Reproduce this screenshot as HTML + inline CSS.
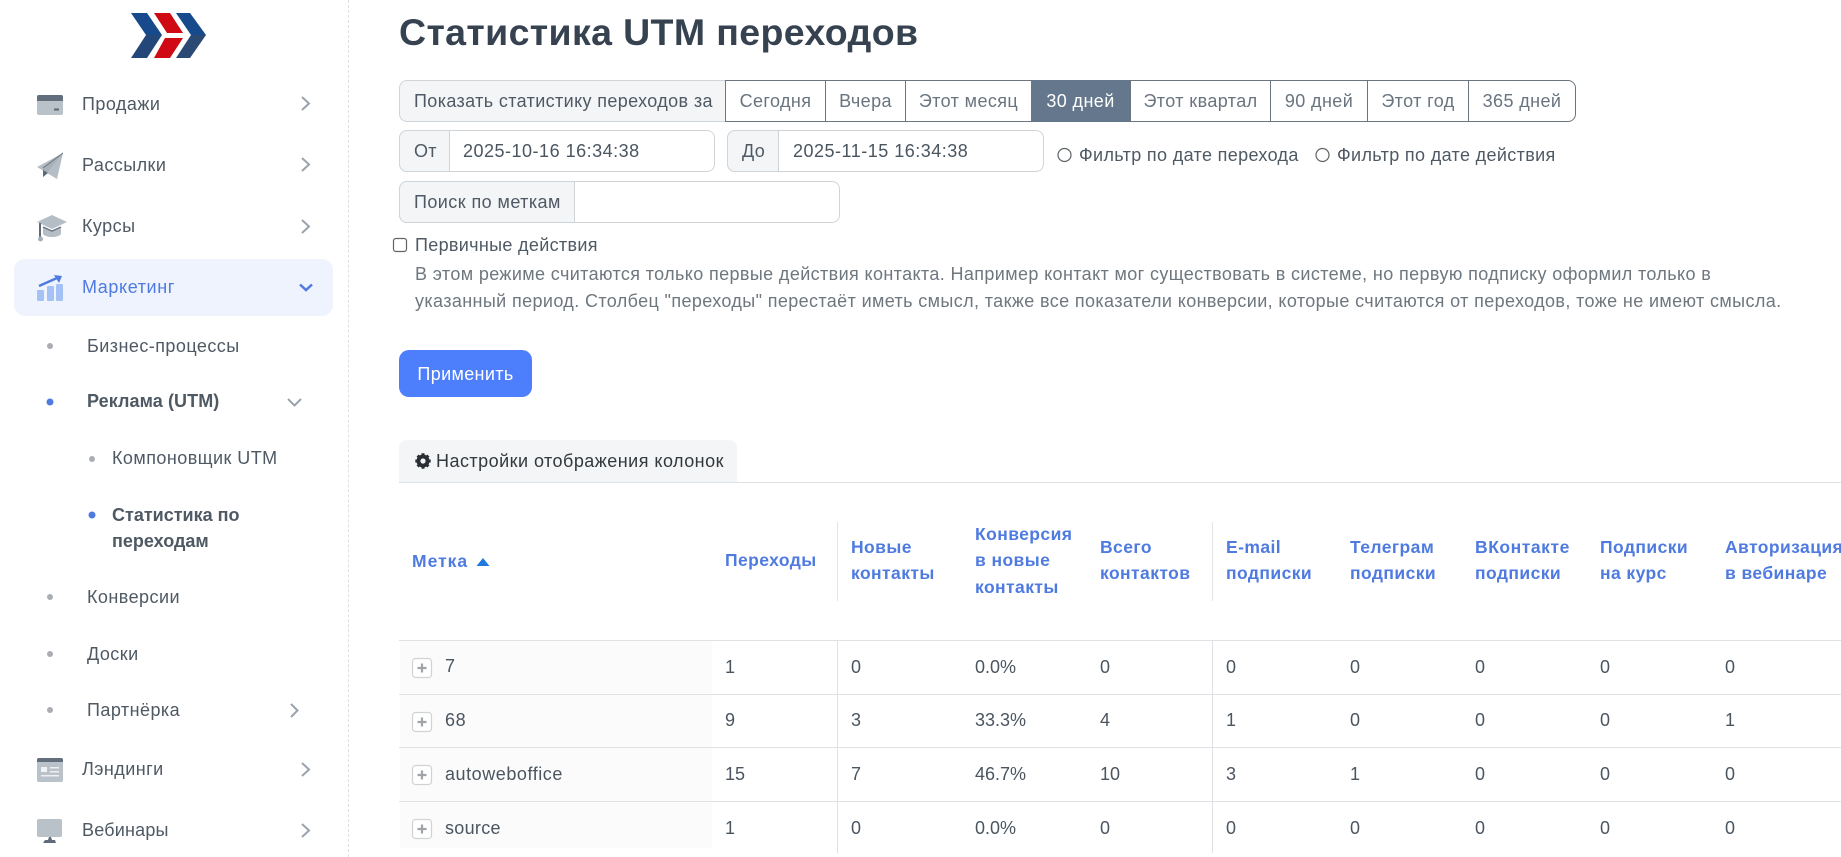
<!DOCTYPE html>
<html lang="ru"><head><meta charset="utf-8"><title>Статистика UTM переходов</title>
<style>
html,body{margin:0;padding:0;background:#fff}
body{width:1841px;height:857px;overflow:hidden;position:relative;font-family:"Liberation Sans",sans-serif;font-size:18px;color:#4e5964}
.a,.t{position:absolute;white-space:nowrap}
.t{line-height:24px;letter-spacing:.38px}
.b{position:absolute;box-sizing:border-box}
.n{color:#4e5964;letter-spacing:.45px}
.h{color:#4f7be0;font-weight:bold;font-size:17.5px;letter-spacing:.42px}
.c{color:#4a5560;letter-spacing:0}
svg{position:absolute;overflow:visible}
.btn{position:absolute;box-sizing:border-box;top:80px;height:42px;border:1px solid #6c757d;line-height:41px;text-align:center;color:#69747f;background:#fff;letter-spacing:.4px;white-space:nowrap}
</style></head><body>

<div class="b" style="left:348px;top:0;height:857px;border-left:1px dashed #dcdfe3"></div>
<svg style="left:0;top:0" width="240" height="70">
<polygon points="131,13 147,13 162,35 146,35" fill="#174a8c"/><polygon points="146,35 162,35 147,58 131,58" fill="#24477a"/>
<polygon points="154,13 170,13 183,33 167,33" fill="#d00a14"/><polygon points="165,38 183,38 170,58 154,58" fill="#d00a14"/>
<polygon points="176,13 190,13 206,35 191,35" fill="#174a8c"/><polygon points="191,35 206,35 190,58 176,58" fill="#2a4a74"/>
</svg>

<div class="b" style="left:14px;top:259px;width:319px;height:57px;background:#eef3fd;border-radius:11px"></div>

<!-- icons -->
<svg style="left:37px;top:95px" width="26" height="20"><rect width="26" height="20" rx="2" fill="#b9c1c9"/><path d="M0 6V2a2 2 0 0 1 2-2h22a2 2 0 0 1 2 2v4z" fill="#626e7c"/><rect x="17" y="13.500" width="5" height="2" fill="#5c6875"/></svg>
<svg style="left:37px;top:153px" width="26" height="26"><path d="M26 0 20 26 10 20 0 14z" fill="#b5bdc5"/><path d="M26 0 6 15 6 24 10 20z" fill="#a8b0b8"/><path d="M6 17v7l5-4z" fill="#5d6976"/><path d="M26 0 6 15" stroke="#6a7581" stroke-width="1"/></svg>
<svg style="left:37px;top:215px" width="30" height="27"><path d="M15 0 30 7 15 14 0 7z" fill="#b5bdc5"/><path d="M6 12 15 16 24 12V19C21 23 9 23 6 19z" fill="#b5bdc5"/><path d="M6 12 15 16 24 12" stroke="#6c7783" stroke-width="1.500" fill="none"/><rect x="2" y="8" width="2" height="14" fill="#5f6b78"/><circle cx="3.500" cy="24" r="2.500" fill="#a7afb8"/></svg>
<svg style="left:37px;top:275px" width="27" height="26"><rect x="0" y="15" width="7" height="11" rx="1" fill="#a5c2f6"/><rect x="10" y="11" width="7" height="15" rx="1" fill="#a5c2f6"/><rect x="19" y="9" width="7" height="17" rx="1" fill="#a5c2f6"/><path d="M2 11 20 3" stroke="#4f7be0" stroke-width="2.500" fill="none"/><path d="M17 0 25 1 22 8z" fill="#4f7be0"/></svg>
<svg style="left:37px;top:758px" width="26" height="24"><rect width="26" height="24" rx="2" fill="#b9c1c9"/><path d="M0 4V2a2 2 0 0 1 2-2h22a2 2 0 0 1 2 2v2z" fill="#626e7c"/><rect x="4" y="9" width="6" height="5" fill="#f0f2f4"/><rect x="13" y="9" width="9" height="1.500" fill="#eef0f2"/><rect x="13" y="13" width="9" height="1.500" fill="#eef0f2"/><rect x="4" y="17" width="18" height="1.500" fill="#eef0f2"/></svg>
<svg style="left:37px;top:819px" width="26" height="24"><rect width="25" height="18" rx="2" fill="#b9c1c9"/><path d="M6 24 8 21H11L12 18H14L15 21H18L19 24z" fill="#5f6b78"/></svg>

<!-- sidebar text -->
<div class="t n" style="left:82px;top:92px">Продажи</div>
<div class="t n" style="left:82px;top:153px">Рассылки</div>
<div class="t n" style="left:82px;top:214px">Курсы</div>
<div class="t" style="left:82px;top:275px;color:#4f7be0;letter-spacing:.6px">Маркетинг</div>
<div class="t n" style="left:87px;top:334px">Бизнес-процессы</div>
<div class="t n" style="left:87px;top:389px;font-weight:bold;letter-spacing:.08px">Реклама (UTM)</div>
<div class="t n" style="left:112px;top:446px">Компоновщик UTM</div>
<div class="t n" style="left:112px;top:503px;font-weight:bold;letter-spacing:0">Статистика по</div>
<div class="t n" style="left:112px;top:529px;font-weight:bold;letter-spacing:0">переходам</div>
<div class="t n" style="left:87px;top:585px">Конверсии</div>
<div class="t n" style="left:87px;top:642px">Доски</div>
<div class="t n" style="left:87px;top:698px">Партнёрка</div>
<div class="t n" style="left:82px;top:757px">Лэндинги</div>
<div class="t n" style="left:82px;top:818px;letter-spacing:.2px">Вебинары</div>

<svg style="left:0;top:0" width="348" height="857" fill="none">
<g stroke="#9aa3ad" stroke-width="2"><path d="M302 97l7 6.500-7 6.500M302 158l7 6.500-7 6.500M302 220l7 6.500-7 6.500M302 763l7 6.500-7 6.500M302 824l7 6.500-7 6.500M291 704l6.500 6.500-6.500 6.500M288 399l6.500 6.500 6.500-6.500"/></g>
<path d="M300 284.500l6 5.500 6-5.500" stroke="#4f7be0" stroke-width="2.500"/>
<g fill="#aaaeb2" stroke="none"><circle cx="50" cy="346" r="3"/><circle cx="92" cy="459" r="3"/><circle cx="50" cy="597" r="3"/><circle cx="50" cy="654" r="3"/><circle cx="50" cy="710" r="3"/></g>
<g fill="#4f7be0" stroke="none"><circle cx="50" cy="402" r="3.500"/><circle cx="92" cy="515" r="3.500"/></g>
</svg>

<!-- title -->
<div class="a" style="left:399px;top:10px;font-size:37.500px;line-height:44px;font-weight:bold;color:#36424f;letter-spacing:.37px">Статистика UTM переходов</div>

<!-- period -->
<div class="b" style="left:399px;top:80px;width:327px;height:42px;background:#f3f5f7;border:1px solid #cfd4d9;border-right:0;border-radius:8px 0 0 8px;line-height:41px;padding-left:14px;color:#4e5964;letter-spacing:.37px;white-space:nowrap">Показать статистику переходов за</div>
<div class="btn" style="left:725px;width:101px">Сегодня</div>
<div class="btn" style="left:825px;width:81px">Вчера</div>
<div class="btn" style="left:905px;width:127px">Этот месяц</div>
<div class="btn" style="left:1031px;width:99px;background:#64778d;border-color:#64778d;color:#fff">30 дней</div>
<div class="btn" style="left:1130px;width:141px">Этот квартал</div>
<div class="btn" style="left:1270px;width:98px">90 дней</div>
<div class="btn" style="left:1367px;width:102px">Этот год</div>
<div class="btn" style="left:1468px;width:108px;border-radius:0 8px 8px 0">365 дней</div>

<!-- dates -->
<div class="b" style="left:399px;top:130px;width:316px;height:42px;border:1px solid #cfd4d9;border-radius:8px"></div>
<div class="b" style="left:399px;top:130px;width:51px;height:42px;background:#f3f5f7;border:1px solid #cfd4d9;border-radius:8px 0 0 8px;line-height:41px;padding-left:14px;letter-spacing:.3px">От</div>
<div class="t c" style="left:463px;top:139px;letter-spacing:.5px">2025-10-16 16:34:38</div>
<div class="b" style="left:727px;top:130px;width:317px;height:42px;border:1px solid #cfd4d9;border-radius:8px"></div>
<div class="b" style="left:727px;top:130px;width:52px;height:42px;background:#f3f5f7;border:1px solid #cfd4d9;border-radius:8px 0 0 8px;line-height:41px;padding-left:14px;letter-spacing:.3px">До</div>
<div class="t c" style="left:793px;top:139px;letter-spacing:.5px">2025-11-15 16:34:38</div>

<svg style="left:0;top:0" width="1400" height="260" fill="none">
<circle cx="1064.500" cy="155" r="6.500" stroke="#5f6468" stroke-width="1.200"/>
<circle cx="1322.500" cy="155" r="6.500" stroke="#5f6468" stroke-width="1.200"/>
<rect x="393.500" y="238.500" width="13" height="13" rx="2.500" stroke="#5f6468" stroke-width="1.200"/>
</svg>
<div class="t n" style="left:1079px;top:143px;letter-spacing:.35px">Фильтр по дате перехода</div>
<div class="t n" style="left:1337px;top:143px;letter-spacing:.35px">Фильтр по дате действия</div>

<!-- search -->
<div class="b" style="left:399px;top:181px;width:441px;height:42px;border:1px solid #cfd4d9;border-radius:8px"></div>
<div class="b" style="left:399px;top:181px;width:176px;height:42px;background:#f3f5f7;border:1px solid #cfd4d9;border-radius:8px 0 0 8px;line-height:41px;padding-left:14px;letter-spacing:.43px;white-space:nowrap">Поиск по меткам</div>

<div class="t n" style="left:415px;top:233px;letter-spacing:.32px">Первичные действия</div>
<div class="t" style="left:415px;top:262px;color:#6e767e;letter-spacing:.377px">В этом режиме считаются только первые действия контакта. Например контакт мог существовать в системе, но первую подписку оформил только в</div>
<div class="t" style="left:415px;top:289px;color:#6e767e;letter-spacing:.377px">указанный период. Столбец "переходы" перестаёт иметь смысл, также все показатели конверсии, которые считаются от переходов, тоже не имеют смысла.</div>

<div class="b" style="left:399px;top:350px;width:133px;height:47px;background:#4d7efb;border-radius:10px;color:#fff;text-align:center;line-height:48px;letter-spacing:.35px">Применить</div>

<!-- tab -->
<div class="b" style="left:399px;top:440px;width:338px;height:42px;background:#f3f5f6;border-radius:8px 8px 0 0"></div>
<div class="b" style="left:399px;top:482px;width:1442px;border-top:1px solid #dfe2e5"></div>
<svg style="left:415px;top:453px" width="16" height="16" viewBox="0 0 16 16"><circle cx="8" cy="8" r="4.800" fill="none" stroke="#2b2f33" stroke-width="3.400"/><g stroke="#2b2f33" stroke-width="3"><path d="M8 .3v15.400M.3 8h15.400M2.600 2.600l10.800 10.800M13.400 2.600 2.600 13.400"/></g><circle cx="8" cy="8" r="2.600" fill="#f3f5f6"/></svg>
<div class="t" style="left:436px;top:449px;color:#33383d;letter-spacing:.47px">Настройки отображения колонок</div>

<!-- table head -->
<div class="t h" style="left:412px;top:549px;letter-spacing:1px">Метка</div>
<svg style="left:476px;top:558px" width="14" height="8"><path d="M7 0 13.500 8H.5z" fill="#1f7ae0"/></svg>
<div class="t h" style="left:725px;top:548px">Переходы</div>
<div class="t h" style="left:851px;top:535px">Новые</div><div class="t h" style="left:851px;top:561px">контакты</div>
<div class="t h" style="left:975px;top:522px">Конверсия</div><div class="t h" style="left:975px;top:548px">в новые</div><div class="t h" style="left:975px;top:575px">контакты</div>
<div class="t h" style="left:1100px;top:535px">Всего</div><div class="t h" style="left:1100px;top:561px">контактов</div>
<div class="t h" style="left:1226px;top:535px">E-mail</div><div class="t h" style="left:1226px;top:561px">подписки</div>
<div class="t h" style="left:1350px;top:535px">Телеграм</div><div class="t h" style="left:1350px;top:561px">подписки</div>
<div class="t h" style="left:1475px;top:535px;letter-spacing:.55px">ВКонтакте</div><div class="t h" style="left:1475px;top:561px">подписки</div>
<div class="t h" style="left:1600px;top:535px">Подписки</div><div class="t h" style="left:1600px;top:561px">на курс</div>
<div class="t h" style="left:1725px;top:535px">Авторизация</div><div class="t h" style="left:1725px;top:561px">в вебинаре</div>

<!-- table body -->
<div class="b" style="left:400px;top:641px;width:312px;height:207px;background:#fbfbfb"></div>
<div class="b" style="left:837px;top:522px;height:79px;border-left:1px solid #e2e4e7"></div>
<div class="b" style="left:1212px;top:522px;height:79px;border-left:1px solid #e2e4e7"></div>
<div class="b" style="left:837px;top:640px;height:213px;border-left:1px solid #dfe1e4"></div>
<div class="b" style="left:1212px;top:640px;height:213px;border-left:1px solid #dfe1e4"></div>
<div class="b" style="left:399px;top:640px;width:1442px;border-top:1px solid #dfe1e4"></div>
<div class="b" style="left:399px;top:694px;width:1442px;border-top:1px solid #dfe1e4"></div>
<div class="b" style="left:399px;top:747px;width:1442px;border-top:1px solid #dfe1e4"></div>
<div class="b" style="left:399px;top:801px;width:1442px;border-top:1px solid #dfe1e4"></div>

<svg style="left:0;top:0" width="460" height="857" fill="none">
<g stroke="#d0d3d6" stroke-width="1.200" fill="#fff"><rect x="412.500" y="658.500" width="19" height="19" rx="3"/><rect x="412.500" y="712.500" width="19" height="19" rx="3"/><rect x="412.500" y="765.500" width="19" height="19" rx="3"/><rect x="412.500" y="819.500" width="19" height="19" rx="3"/></g>
<path d="M422 663.500v9M417.500 668h9M422 717.500v9M417.500 722h9M422 770.500v9M417.500 775h9M422 824.500v9M417.500 829h9" stroke="#a0a4a8" stroke-width="2.200"/>
</svg>
<div class="t c" style="left:445px;top:654px;letter-spacing:.6px">7</div>
<div class="t c" style="left:445px;top:708px;letter-spacing:.6px">68</div>
<div class="t c" style="left:445px;top:762px;letter-spacing:.55px">autoweboffice</div>
<div class="t c" style="left:445px;top:816px;letter-spacing:.3px">source</div>

<!-- row 1 -->
<div class="t c" style="left:725px;top:655px">1</div><div class="t c" style="left:851px;top:655px">0</div><div class="t c" style="left:975px;top:655px">0.0%</div><div class="t c" style="left:1100px;top:655px">0</div><div class="t c" style="left:1226px;top:655px">0</div><div class="t c" style="left:1350px;top:655px">0</div><div class="t c" style="left:1475px;top:655px">0</div><div class="t c" style="left:1600px;top:655px">0</div><div class="t c" style="left:1725px;top:655px">0</div>
<!-- row 2 -->
<div class="t c" style="left:725px;top:708px">9</div><div class="t c" style="left:851px;top:708px">3</div><div class="t c" style="left:975px;top:708px">33.3%</div><div class="t c" style="left:1100px;top:708px">4</div><div class="t c" style="left:1226px;top:708px">1</div><div class="t c" style="left:1350px;top:708px">0</div><div class="t c" style="left:1475px;top:708px">0</div><div class="t c" style="left:1600px;top:708px">0</div><div class="t c" style="left:1725px;top:708px">1</div>
<!-- row 3 -->
<div class="t c" style="left:725px;top:762px">15</div><div class="t c" style="left:851px;top:762px">7</div><div class="t c" style="left:975px;top:762px">46.7%</div><div class="t c" style="left:1100px;top:762px">10</div><div class="t c" style="left:1226px;top:762px">3</div><div class="t c" style="left:1350px;top:762px">1</div><div class="t c" style="left:1475px;top:762px">0</div><div class="t c" style="left:1600px;top:762px">0</div><div class="t c" style="left:1725px;top:762px">0</div>
<!-- row 4 -->
<div class="t c" style="left:725px;top:816px">1</div><div class="t c" style="left:851px;top:816px">0</div><div class="t c" style="left:975px;top:816px">0.0%</div><div class="t c" style="left:1100px;top:816px">0</div><div class="t c" style="left:1226px;top:816px">0</div><div class="t c" style="left:1350px;top:816px">0</div><div class="t c" style="left:1475px;top:816px">0</div><div class="t c" style="left:1600px;top:816px">0</div><div class="t c" style="left:1725px;top:816px">0</div>
</body></html>
